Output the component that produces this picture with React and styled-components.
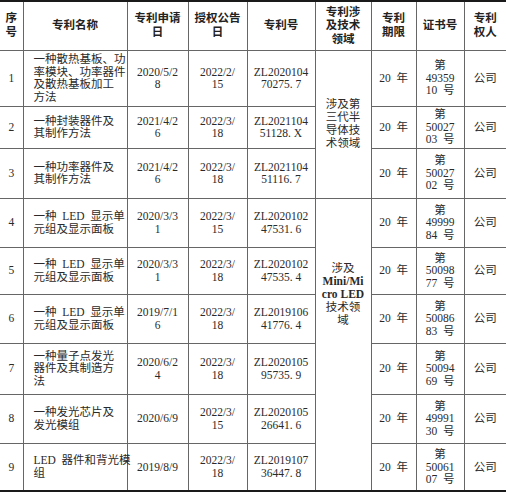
import React from "react"
import styled, { createGlobalStyle } from "styled-components"

const GlobalStyle = createGlobalStyle`
body {
  margin: 0;
  background: #fff;
}
`

const Table = styled.table`
width: 506px;
table-layout: fixed;
border-collapse: collapse;
border-top: 2px solid #1a1a1a;
border-bottom: 2px solid #1a1a1a;
font-family: "Liberation Serif", "Noto Sans CJK SC", serif;
font-size: 11.5px;
color: #2a2a2a;
`

const Row = styled.tr`
height: ${(p) => p.h}px;
`

const HeadCell = styled.th`
padding: 0;
border: 1px solid #666;
border-top: none;
font-weight: 700;
line-height: 13.5px;
text-align: center;
vertical-align: middle;
white-space: nowrap;
color: #222;
&:first-child { border-left: none; }
&:last-child { border-right: none; }
`

const Cell = styled.td`
padding: ${(p) => (p.left ? "0 0 0 10px" : "0")};
border: 1px solid #666;
line-height: 12.5px;
text-align: ${(p) => (p.left ? "left" : "center")};
vertical-align: middle;
white-space: pre;
&:first-child { border-left: none; }
&:last-child { border-right: none; }
`

const FieldCell = styled.td`
padding: ${(p) => (p.top ? `${p.top}px 0 0` : "0")};
border: 1px solid #666;
line-height: 13px;
text-align: center;
vertical-align: ${(p) => (p.top ? "top" : "middle")};
white-space: nowrap;
`

const Latin = styled.span`
font-weight: 700;
`

const cols = [23, 104, 61, 59, 68, 56, 45, 48, 42]

// en space between Latin and CJK, as the source document spaces them
const S = "\u2002"

const heads = [
  ["序", "号"],
  ["专利名称"],
  ["专利申请", "日"],
  ["授权公告", "日"],
  ["专利号"],
  ["专利涉", "及技术", "领域"],
  ["专利", "期限"],
  ["证书号"],
  ["专利", "权人"],
]

const rows = [
  { h: 56, name: ["一种散热基板、功", "率模块、功率器件", "及散热基板加工", "方法"], apply: ["2020/5/2", "8"], grant: ["2022/2/", "15"], no: ["ZL2020104", "70275. 7"], cert: ["第", "49359", `10${S}号`] },
  { h: 42, name: ["一种封装器件及", "其制作方法"], apply: ["2021/4/2", "6"], grant: ["2022/3/", "18"], no: ["ZL2021104", "51128. X"], cert: ["第", "50027", `03${S}号`] },
  { h: 50, name: ["一种功率器件及", "其制作方法"], apply: ["2021/4/2", "6"], grant: ["2022/3/", "18"], no: ["ZL2021104", "51116. 7"], cert: ["第", "50027", `02${S}号`] },
  { h: 49, name: [`一种${S}LED${S}显示单`, "元组及显示面板"], apply: ["2020/3/3", "1"], grant: ["2022/3/", "15"], no: ["ZL2020102", "47531. 6"], cert: ["第", "49999", `84${S}号`] },
  { h: 47, name: [`一种${S}LED${S}显示单`, "元组及显示面板"], apply: ["2020/3/3", "1"], grant: ["2022/3/", "18"], no: ["ZL2020102", "47535. 4"], cert: ["第", "50098", `77${S}号`] },
  { h: 49, name: [`一种${S}LED${S}显示单`, "元组及显示面板"], apply: ["2019/7/1", "6"], grant: ["2022/3/", "18"], no: ["ZL2019106", "41776. 4"], cert: ["第", "50086", `83${S}号`] },
  { h: 51, name: ["一种量子点发光", "器件及其制造方", "法"], apply: ["2020/6/2", "4"], grant: ["2022/3/", "18"], no: ["ZL2020105", "95735. 9"], cert: ["第", "50094", `69${S}号`] },
  { h: 49, name: ["一种发光芯片及", "发光模组"], apply: ["2020/6/9"], grant: ["2022/3/", "15"], no: ["ZL2020105", "26641. 6"], cert: ["第", "49991", `30${S}号`] },
  { h: 48, name: [`LED${S}器件和背光模`, "组"], apply: ["2019/8/9"], grant: ["2022/3/", "18"], no: ["ZL2019107", "36447. 8"], cert: ["第", "50061", `07${S}号`] },
]

const Lines = ({ lines }) =>
  lines.map((l, i) => (
    <React.Fragment key={i}>
      {i > 0 && <br />}
      {l}
    </React.Fragment>
  ))

export default function App() {
  return (
    <>
      <GlobalStyle />
      <Table>
        <colgroup>
          {cols.map((w, i) => (
            <col key={i} style={{ width: w }} />
          ))}
        </colgroup>
        <thead>
          <Row h={49}>
            {heads.map((h, i) => (
              <HeadCell key={i}>
                <Lines lines={h} />
              </HeadCell>
            ))}
          </Row>
        </thead>
        <tbody>
          {rows.map((r, i) => (
            <Row key={i} h={r.h}>
              <Cell>{i + 1}</Cell>
              <Cell left>
                <Lines lines={r.name} />
              </Cell>
              <Cell>
                <Lines lines={r.apply} />
              </Cell>
              <Cell>
                <Lines lines={r.grant} />
              </Cell>
              <Cell>
                <Lines lines={r.no} />
              </Cell>
              {i === 0 && (
                <FieldCell rowSpan={3}>
                  涉及第<br />三代半<br />导体技<br />术领域
                </FieldCell>
              )}
              {i === 3 && (
                <FieldCell rowSpan={6} top={63}>
                  涉及<br />
                  <Latin>Mini/Mi</Latin>
                  <br />
                  <Latin>cro LED</Latin>
                  <br />
                  技术领<br />域
                </FieldCell>
              )}
              <Cell>{`20${S}年`}</Cell>
              <Cell>
                <Lines lines={r.cert} />
              </Cell>
              <Cell>公司</Cell>
            </Row>
          ))}
        </tbody>
      </Table>
    </>
  )
}
